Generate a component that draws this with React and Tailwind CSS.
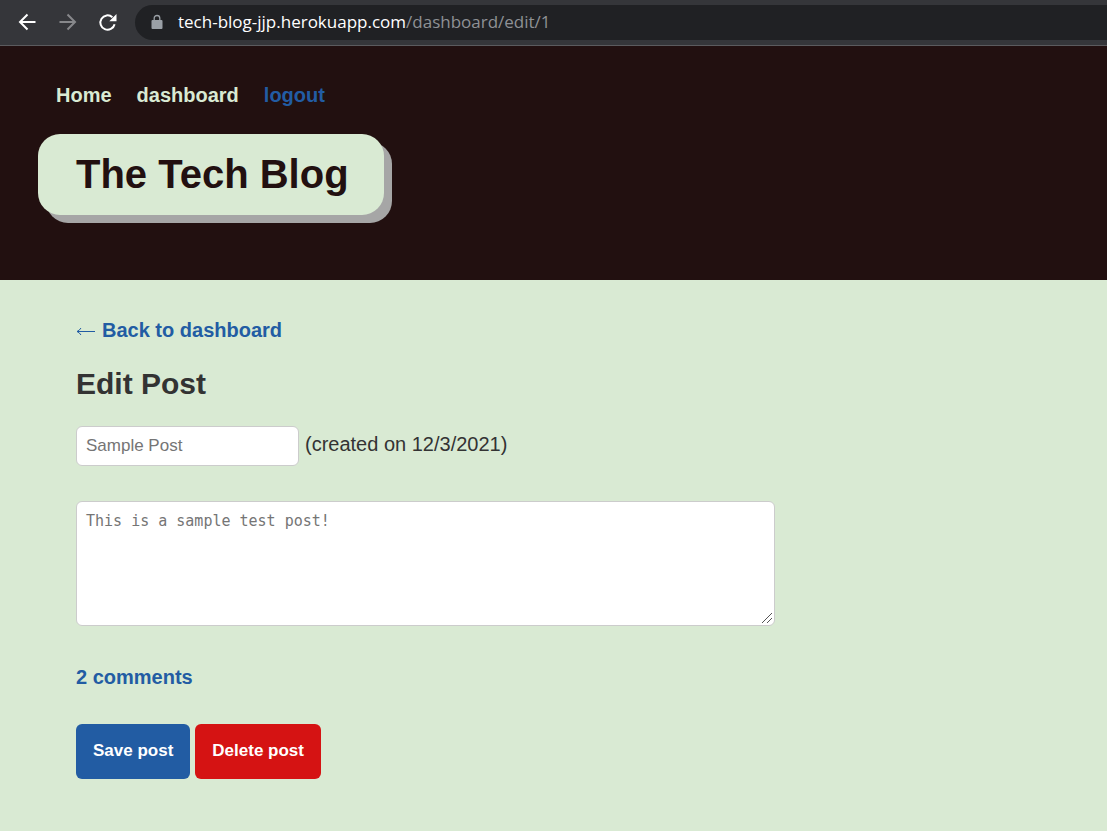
import React from "react";

function BrowserBar() {
  return (
    <div className="flex h-[46px] items-center border-b border-[#5b5b5e] bg-[#35363a] pb-px pl-[15px]">
      <div className="flex items-center gap-4">
        <button type="button" aria-label="Back" className="flex size-6 items-center justify-center text-white">
          <svg viewBox="0 0 24 24" className="size-6" fill="none" stroke="currentColor" strokeWidth="2">
            <path d="M20.5 12H5.5M12.5 4.5L5 12l7.5 7.5" />
          </svg>
        </button>
        <button type="button" aria-label="Forward" className="flex size-6 items-center justify-center text-[#87888b]">
          <svg viewBox="0 0 24 24" className="size-6" fill="none" stroke="currentColor" strokeWidth="2">
            <path d="M4.500 12H19.500M12.500 4.500L20 12l-7.500 7.500" />
          </svg>
        </button>
        <button type="button" aria-label="Reload" className="flex size-6 items-center justify-center text-white">
          <svg viewBox="0 0 24 24" className="size-6">
            <path d="M19.600 14.200A7.200 7.200 0 1 1 17.400 7.200" fill="none" stroke="currentColor" strokeWidth="2" />
            <path d="M21.500 4v7.200h-7.200z" fill="currentColor" />
          </svg>
        </button>
      </div>
      <div className="ml-4 flex h-[35px] flex-1 items-center gap-[15px] rounded-l-full bg-[#202124] pl-4">
        <svg viewBox="0 0 12 16" className="h-4 w-3 shrink-0 text-[#9aa0a6]" aria-hidden="true">
          <path
            d="M1.500 6h9a1 1 0 0 1 1 1V14a1 1 0 0 1-1 1h-9a1 1 0 0 1-1-1V7a1 1 0 0 1 1-1z"
            fill="currentColor"
          />
          <path d="M3.200 6V4.300a2.800 2.800 0 0 1 5.600 0v2" fill="none" stroke="currentColor" strokeWidth="1.300" />
        </svg>
        <p className="font-['Open_Sans',sans-serif] text-[17px] leading-6 text-[#8f9195]">
          <span className="text-white">tech-blog-jjp.herokuapp.com</span>/dashboard/edit/1
        </p>
      </div>
    </div>
  );
}

function SiteHeader() {
  return (
    <header className="bg-[#221010] px-[38px] pt-[34px] pb-[65px]">
      <nav className="flex gap-[25px] pl-[18px] text-[20px] leading-[30px] font-bold text-[#d9ead3]">
        <a href="#home">Home</a>
        <a href="#dashboard">dashboard</a>
        <a href="#logout" className="text-[#225ca3]">logout</a>
      </nav>
      <h1 className="mt-6 w-fit rounded-[22px] bg-[#d9ead3] pt-[10px] pr-[35px] pb-[11px] pl-[38px] text-[40px] leading-[60px] font-bold text-[#221010] shadow-[8px_8px_0_#a6a6a6]">
        The Tech Blog
      </h1>
    </header>
  );
}

export default function App() {
  return (
    <div className="flex min-h-screen flex-col bg-[#d9ead3] font-['Liberation_Sans',Arial,sans-serif] text-[20px] leading-[30px] text-[#333333]">
      <BrowserBar />
      <SiteHeader />
      <main className="px-[76px] pt-[35px] pb-[52px]">
        <a href="#dashboard" className="flex w-fit items-center gap-[6px] font-bold text-[#225ca3]">
          <svg viewBox="0 0 20 14" className="h-[14px] w-5" fill="none" stroke="currentColor" aria-hidden="true">
            <path d="M1 8.500H19M5 5Q3.500 7.500 1 8.500Q3.500 9.500 5 12" />
          </svg>
          Back to dashboard
        </a>
        <h2 className="mt-4 text-[30px] leading-[45px] font-bold">Edit Post</h2>
        <form onSubmit={(event) => event.preventDefault()}>
          <div className="mt-5 flex items-center gap-[6px]">
            <input
              type="text"
              aria-label="Post title"
              placeholder="Sample Post"
              className="h-10 w-[223px] rounded-md border border-[#cccccc] bg-white px-[9px] text-[17px] leading-5 placeholder:text-[#757575]"
            />
            <p className="pb-1">(created on 12/3/2021)</p>
          </div>
          <div className="relative mt-[35px] max-w-[699px]">
            <textarea
              aria-label="Post content"
              placeholder="This is a sample test post!"
              className="block h-[125px] w-full resize-y rounded-md border border-[#cccccc] bg-white px-[9px] py-[9px] font-['DejaVu_Sans_Mono',monospace] text-[15px] leading-5 placeholder:text-[#757575] [&::-webkit-resizer]:bg-transparent"
            />
            <svg
              viewBox="0 0 10 10"
              className="pointer-events-none absolute right-[3px] bottom-[3px] size-[10px]"
              fill="none"
              stroke="#555555"
              aria-hidden="true"
            >
              <path d="M0 10L10 0M5 10L10 5" />
            </svg>
          </div>
          <a href="#comments" className="mt-9 block w-fit font-bold text-[#225ca3]">
            2 comments
          </a>
          <div className="mt-8 flex gap-[5px] text-[17px] leading-5 font-bold text-white">
            <button type="submit" className="h-[55px] rounded-md bg-[#225ca3] px-[17px] pb-[2px]">
              Save post
            </button>
            <button type="button" className="h-[55px] rounded-md bg-[#d51313] px-[17px] pb-[2px]">
              Delete post
            </button>
          </div>
        </form>
      </main>
    </div>
  );
}
